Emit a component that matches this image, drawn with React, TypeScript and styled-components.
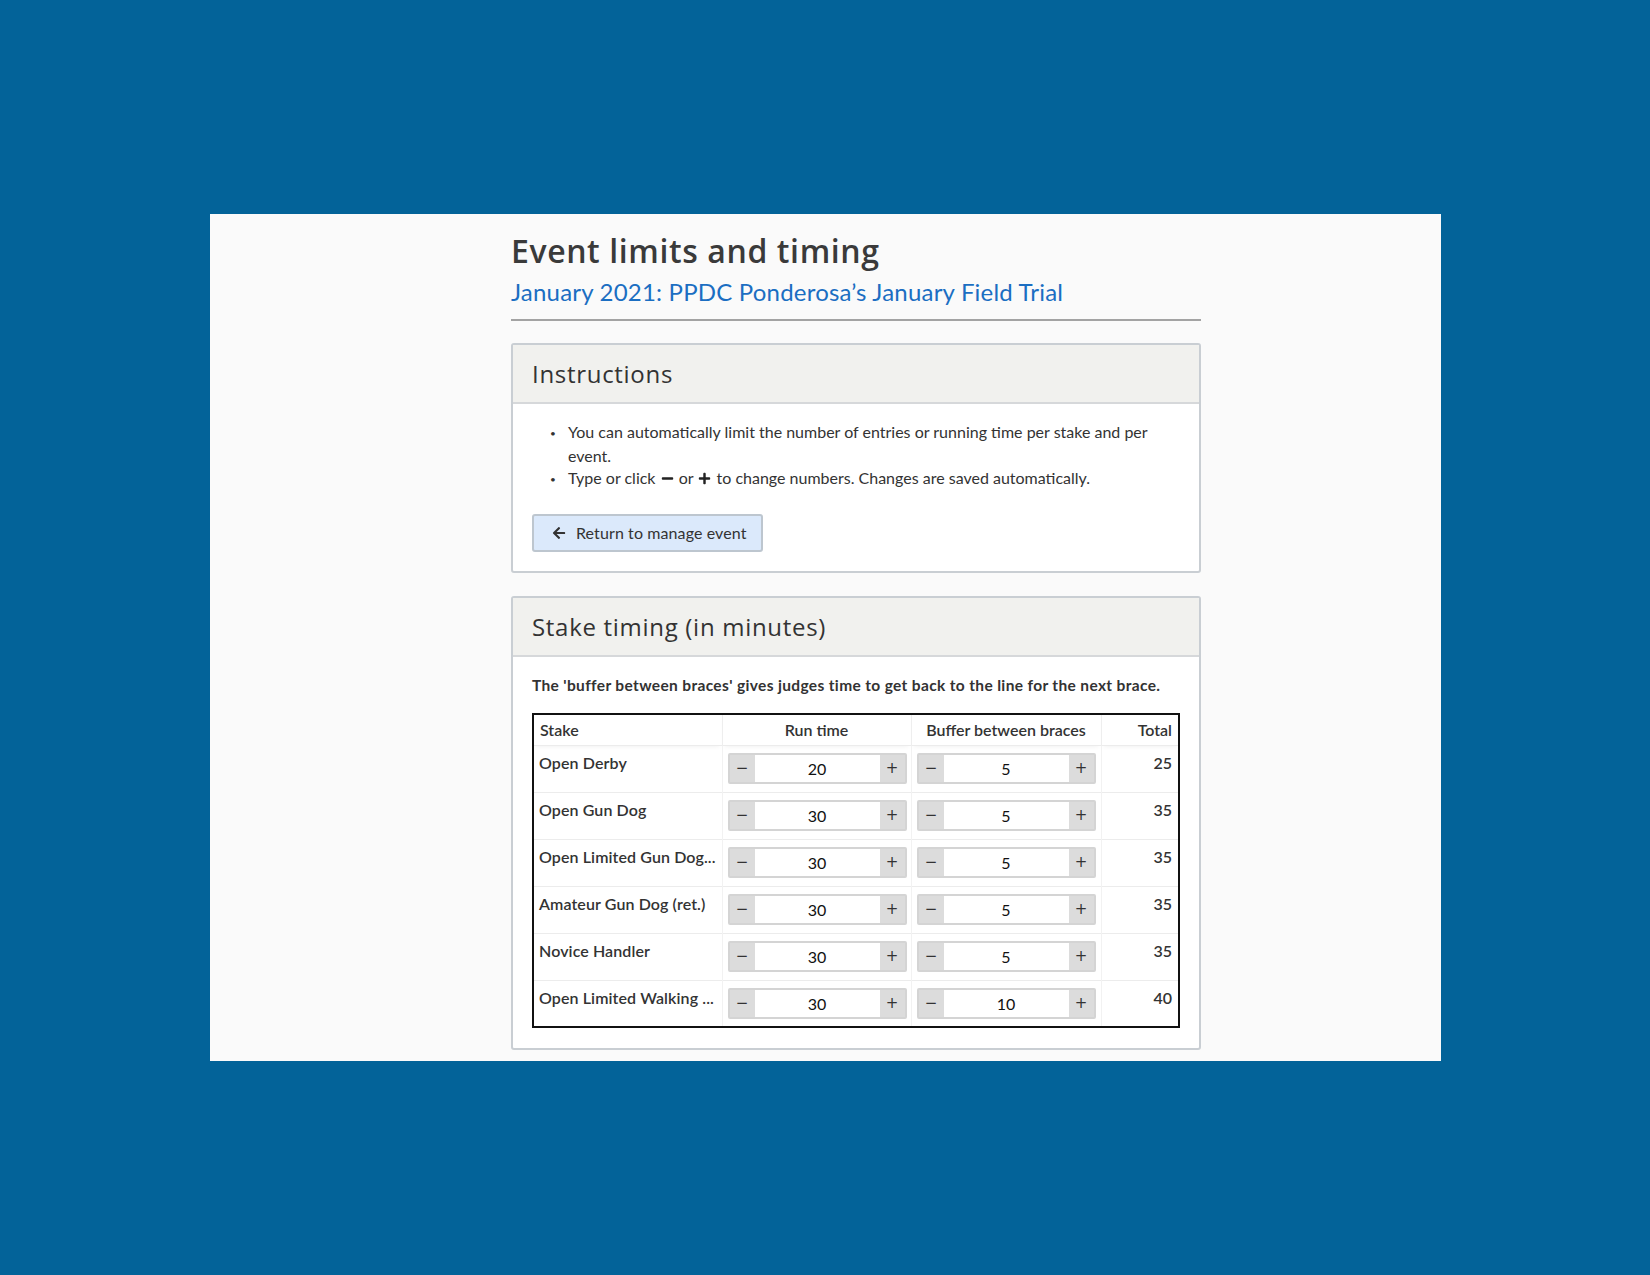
import styled, { createGlobalStyle } from "styled-components";
import { FaArrowLeft, FaMinus, FaPlus } from "react-icons/fa";

interface Stake {
  name: string;
  runTime: number;
  buffer: number;
}

const stakes: Stake[] = [
  { name: "Open Derby", runTime: 20, buffer: 5 },
  { name: "Open Gun Dog", runTime: 30, buffer: 5 },
  { name: "Open Limited Gun Dog...", runTime: 30, buffer: 5 },
  { name: "Amateur Gun Dog (ret.)", runTime: 30, buffer: 5 },
  { name: "Novice Handler", runTime: 30, buffer: 5 },
  { name: "Open Limited Walking ...", runTime: 30, buffer: 10 },
];

const GlobalStyle = createGlobalStyle`
  html, body {
    margin: 0;
    padding: 0;
    background: #036399;
  }
  body {
    font-family: Lato, "Open Sans", sans-serif;
    color: #333;
  }
`;

const Backdrop = styled.div`
  width: 1650px;
  height: 1275px;
  padding: 214px 0 0 210px;
  box-sizing: border-box;
`;

const Sheet = styled.div`
  width: 1231px;
  height: 847px;
  background: #fafafa;
  padding: 17px 0 0 301px;
  box-sizing: border-box;
`;

const Column = styled.div`
  width: 690px;
`;

const Title = styled.h1`
  margin: 0;
  font-family: "Open Sans", sans-serif;
  font-size: 32px;
  font-weight: 600;
  line-height: 40px;
  color: #3a3a3a;
  letter-spacing: 0.6px;
`;

const Subtitle = styled.div`
  font-size: 24px;
  line-height: 30px;
  margin-top: 6px;
  letter-spacing: 0.2px;
  color: #1b6ec2;
  padding-bottom: 12px;
  border-bottom: 2px solid #a3a3a3;
`;

const Card = styled.section<{ $gap?: number }>`
  margin-top: ${(p) => p.$gap ?? 22}px;
  border: 2px solid #c9ced3;
  border-radius: 3px;
  background: #fff;
`;

const CardHeader = styled.header`
  height: 57px;
  display: flex;
  align-items: center;
  padding: 0 19px;
  background: #f1f1ee;
  border-bottom: 2px solid #d6d8da;
  font-family: "Open Sans", sans-serif;
  font-size: 24px;
  letter-spacing: 0.7px;
  color: #333;
`;

const CardBody = styled.div<{ $bottom?: number }>`
  padding: 17px 19px ${(p) => p.$bottom ?? 20}px;
`;

const List = styled.ul`
  margin: 0 0 23px;
  padding: 0 0 0 36px;
  list-style: none;
  font-size: 16px;
  line-height: 22.5px;
  color: #333;

  li::before {
    content: "•";
    display: inline-block;
    width: 18px;
    margin-left: -18px;
    font-size: 10px;
    vertical-align: 1px;
  }
`;

const InlineIcon = styled.span`
  display: inline-flex;
  vertical-align: -1px;
  font-size: 13px;
  color: #222;
  margin: 0 1px;
`;

const BackButton = styled.button`
  display: flex;
  align-items: center;
  gap: 10px;
  height: 38px;
  padding: 0 14px 0 18px;
  background: #dbe9fb;
  border: 2px solid #bdc6cf;
  border-radius: 3px;
  font-family: Lato, sans-serif;
  font-size: 16px;
  letter-spacing: 0.1px;
  white-space: nowrap;
  color: #333;
  cursor: pointer;

  svg {
    font-size: 14px;
    color: #333;
  }
`;

const Note = styled.p`
  margin: 0 0 17px;
  font-size: 15.5px;
  font-weight: 700;
  letter-spacing: 0.35px;
  line-height: 22px;
  color: #333;
`;

const Table = styled.table`
  width: 648px;
  border-collapse: collapse;
  border: 2px solid #111;
  font-size: 16px;
  color: #333;
  table-layout: fixed;
`;

const Th = styled.th<{ $align?: string }>`
  height: 30px;
  padding: 0 6px;
  font-weight: 600;
  text-align: ${(p) => p.$align ?? "center"};
  border-left: 1px solid #eee;
  box-shadow: 0 4px 5px -3px rgba(0, 0, 0, 0.08);

  &:first-child {
    border-left: none;
  }
`;

const Tr = styled.tr`
  border-top: 1px solid #ececec;
`;

const Td = styled.td<{ $align?: string }>`
  height: 47px;
  padding: 7px 5px 0;
  vertical-align: top;
  text-align: ${(p) => p.$align ?? "left"};
  border-left: 1px solid #f2f2f2;
  box-sizing: border-box;
  white-space: nowrap;
  overflow: hidden;

  &:first-child {
    border-left: none;
  }
`;

const StakeName = styled.span`
  font-weight: 600;
  letter-spacing: 0.1px;
`;

const Stepper = styled.div`
  display: flex;
  width: 179px;
  height: 31px;
  box-sizing: border-box;
  border: 2px solid #d4d4d4;
  border-radius: 2px;
  background: #fff;
`;

const StepButton = styled.button`
  width: 25px;
  padding: 0;
  border: none;
  background: #dcdcdc;
  font-family: "DejaVu Sans", sans-serif;
  font-size: 15px;
  color: #333;
  cursor: pointer;
`;

const StepValue = styled.input`
  flex: 1;
  min-width: 0;
  border: none;
  text-align: center;
  font-family: Lato, sans-serif;
  font-size: 16px;
  color: #111;
  background: #fff;
`;

const Total = styled.span`
  font-weight: 600;
  padding-right: 1px;
`;

function NumberStepper({ value }: { value: number }) {
  return (
    <Stepper>
      <StepButton>−</StepButton>
      <StepValue readOnly value={value} />
      <StepButton>+</StepButton>
    </Stepper>
  );
}

export default function App() {
  return (
    <>
      <GlobalStyle />
      <Backdrop>
        <Sheet>
          <Column>
            <Title>Event limits and timing</Title>
            <Subtitle>January 2021: PPDC Ponderosa’s January Field Trial</Subtitle>

            <Card>
              <CardHeader>Instructions</CardHeader>
              <CardBody $bottom={19}>
                <List>
                  <li>
                    You can automatically limit the number of entries or running
                    time per stake and per event.
                  </li>
                  <li>
                    Type or click{" "}
                    <InlineIcon>
                      <FaMinus />
                    </InlineIcon>{" "}
                    or{" "}
                    <InlineIcon>
                      <FaPlus />
                    </InlineIcon>{" "}
                    to change numbers. Changes are saved automatically.
                  </li>
                </List>
                <BackButton>
                  <FaArrowLeft />
                  Return to manage event
                </BackButton>
              </CardBody>
            </Card>

            <Card $gap={23}>
              <CardHeader>Stake timing (in minutes)</CardHeader>
              <CardBody>
                <Note>
                  The 'buffer between braces' gives judges time to get back to the
                  line for the next brace.
                </Note>
                <Table>
                  <colgroup>
                    <col style={{ width: 189 }} />
                    <col style={{ width: 189 }} />
                    <col style={{ width: 190 }} />
                    <col style={{ width: 78 }} />
                  </colgroup>
                  <thead>
                    <tr>
                      <Th $align="left">Stake</Th>
                      <Th>Run time</Th>
                      <Th>Buffer between braces</Th>
                      <Th $align="right">Total</Th>
                    </tr>
                  </thead>
                  <tbody>
                    {stakes.map((s) => (
                      <Tr key={s.name}>
                        <Td>
                          <StakeName>{s.name}</StakeName>
                        </Td>
                        <Td>
                          <NumberStepper value={s.runTime} />
                        </Td>
                        <Td>
                          <NumberStepper value={s.buffer} />
                        </Td>
                        <Td $align="right">
                          <Total>{s.runTime + s.buffer}</Total>
                        </Td>
                      </Tr>
                    ))}
                  </tbody>
                </Table>
              </CardBody>
            </Card>
          </Column>
        </Sheet>
      </Backdrop>
    </>
  );
}
